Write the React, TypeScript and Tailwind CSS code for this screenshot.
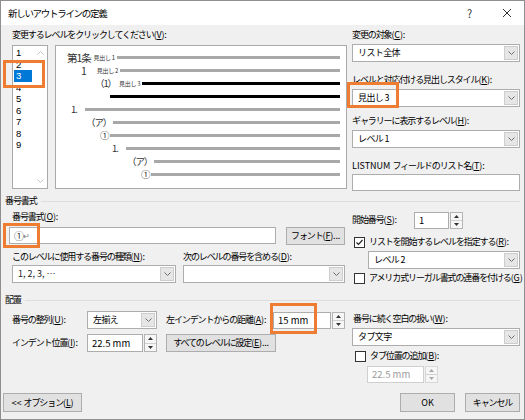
import React from "react";

function K({ t, k, tail = ":" }: { t: string; k: string; tail?: string }) {
  return (
    <span className="whitespace-nowrap">
      {t}
      <span className="tracking-[-0.2px]">
        (<span className="underline underline-offset-1">{k}</span>){tail}
      </span>
    </span>
  );
}

function Chevron({ up = false, color = "#6d6d6d" }: { up?: boolean; color?: string }) {
  return (
    <svg width="7" height="4" viewBox="0 0 7 4">
      <polyline
        points={up ? "0.5,3.5 3.5,0.5 6.5,3.5" : "0.5,0.5 3.5,3.5 6.5,0.5"}
        fill="none"
        stroke={color}
        strokeWidth="1"
      />
    </svg>
  );
}

function Select({
  value,
  className = "",
  valueClass = "tracking-[-0.6px]",
}: {
  value?: string;
  className?: string;
  valueClass?: string;
}) {
  return (
    <div className={`h-[18px] bg-white border border-[#adadad] flex items-stretch ${className}`}>
      <div className={`flex-1 pl-[5px] flex items-center whitespace-pre overflow-hidden ${valueClass}`}>
        {value}
      </div>
      <div className="w-[14px] my-[1px] mr-[1px] bg-[#e6e6e6] border border-[#cdcdcd] flex items-center justify-center">
        <Chevron />
      </div>
    </div>
  );
}

function Tri({ up, color }: { up?: boolean; color: string }) {
  return (
    <svg width="5" height="3" viewBox="0 0 5 3">
      <polygon points={up ? "0,3 5,3 2.5,0" : "0,0 5,0 2.5,3"} fill={color} />
    </svg>
  );
}

function Spin({
  value,
  className = "",
  disabled = false,
}: {
  value: string;
  className?: string;
  disabled?: boolean;
}) {
  const c = disabled ? "#a8a8a8" : "#333333";
  return (
    <div className={`h-[17px] flex gap-[1px] ${className}`}>
      <div
        className={`flex-1 bg-white border flex items-center pl-[4px] whitespace-nowrap tracking-normal text-[9.5px] ${
          disabled ? "border-[#cfcfcf] text-[#9b9b9b]" : "border-[#adadad]"
        }`}
      >
        {value}
      </div>
      <div
        className={`w-[13px] flex flex-col bg-[#f6f6f6] border ${
          disabled ? "border-[#d8d8d8]" : "border-[#b4b4b4]"
        }`}
      >
        <div className="flex-1 flex items-center justify-center border-b border-[#d0d0d0]">
          <Tri up color={c} />
        </div>
        <div className="flex-1 flex items-center justify-center">
          <Tri color={c} />
        </div>
      </div>
    </div>
  );
}

function Check({ checked = false }: { checked?: boolean }) {
  return (
    <div className="w-[11px] h-[11px] bg-white border border-[#333] flex items-center justify-center shrink-0">
      {checked && (
        <svg width="9" height="9" viewBox="0 0 9 9">
          <polyline points="1.5,4.5 3.5,6.5 7.5,2" fill="none" stroke="#222" strokeWidth="1.2" />
        </svg>
      )}
    </div>
  );
}

function Button({ children, className = "" }: { children: React.ReactNode; className?: string }) {
  return (
    <div
      className={`h-[18px] bg-[#e1e1e1] border border-[#adadad] flex items-center justify-center whitespace-nowrap ${className}`}
    >
      {children}
    </div>
  );
}

function Group({ title }: { title: string }) {
  return (
    <div className="h-[14px] flex items-center leading-[14px] pr-[4px]">
      <span>{title}</span>
      <div className="flex-1 h-px bg-[#dddddd] ml-[4px]" />
    </div>
  );
}

function Line({ black = false }: { black?: boolean }) {
  return <div className={`flex-1 h-[3px] ml-[2px] ${black ? "bg-black" : "bg-[#a8a8a8]"}`} />;
}

const Small = ({ children }: { children: React.ReactNode }) => (
  <span className="text-[6px] tracking-[-0.3px] ml-[3px] whitespace-pre">{children}</span>
);

function Preview() {
  return (
    <div className="w-[292px] h-[144px] bg-white border border-[#a9a9a9] pt-[5px] pr-[6px] flex flex-col text-[9.5px] leading-[13px] text-[#333]">
      <div className="h-[13px] flex items-center pl-[11px]">
        <span className="text-[10.5px]">第1条</span>
        <Small>見出し 1</Small>
        <Line />
      </div>
      <div className="h-[13px] flex items-center pl-[25px]">
        <span className="text-[10.5px] mr-[8px]">1</span>
        <Small>見出し 2</Small>
        <Line />
      </div>
      <div className="h-[13px] flex items-center pl-[39px]">
        <span>（1）</span>
        <Small>見出し 3</Small>
        <Line black />
      </div>
      <div className="h-[13px] flex items-center pl-[52px]">
        <Line black />
      </div>
      <div className="h-[13px] flex items-center pl-[15px]">
        <span>1.</span>
        <span className="w-[6px]" />
        <Line />
      </div>
      <div className="h-[13px] flex items-center pl-[30px]">
        <span>（ア）</span>
        <Line />
      </div>
      <div className="h-[13px] flex items-center pl-[44px]">
        <span>①</span>
        <Line />
      </div>
      <div className="h-[13px] flex items-center pl-[56px]">
        <span>1.</span>
        <span className="w-[6px]" />
        <Line />
      </div>
      <div className="h-[13px] flex items-center pl-[71px]">
        <span>（ア）</span>
        <Line />
      </div>
      <div className="h-[13px] flex items-center pl-[85px]">
        <span>①</span>
        <Line />
      </div>
    </div>
  );
}

function LevelList() {
  const levels = ["1", "2", "3", "4", "5", "6", "7", "8", "9"];
  return (
    <div className="w-[36px] h-[144px] bg-white border border-[#a9a9a9] flex">
      <div className="flex-1 pt-[1px] pl-[1px] flex flex-col text-[9.5px] tracking-normal font-['Liberation_Sans',sans-serif]">
        {levels.map((l) => (
          <div
            key={l}
            className={`h-[11.5px] leading-[11.5px] pl-[2px] w-[18px] overflow-hidden ${
              l === "3" ? "bg-[#0078d7] text-white" : ""
            }`}
          >
            {l}
          </div>
        ))}
      </div>
      <div className="w-[14px] flex flex-col items-center justify-between py-[5px]">
        <Chevron up color="#c2c2c2" />
        <Chevron color="#c2c2c2" />
      </div>
    </div>
  );
}

const orange = "absolute border-[3px] border-[#ee7d31]";

export default function App() {
  return (
    <div className="w-[525px] h-[420px] bg-[#f0f0f0] border border-[#8f8f8f] relative flex flex-col text-[9px] tracking-[-1.1px] text-black font-['Noto_Sans_CJK_JP','Noto_Sans',sans-serif] overflow-hidden">
      {/* title bar */}
      <div className="h-[24px] bg-white flex items-center pl-[7px] shrink-0">
        <span className="text-[9.5px] tracking-[-1.3px]">新しいアウトラインの定義</span>
        <div className="ml-auto flex items-center">
          <span className="text-[11px] text-[#333] mr-[31px]">?</span>
          <svg width="10" height="10" viewBox="0 0 10 10" className="mr-[12px]">
            <path d="M1 1 L9 9 M9 1 L1 9" stroke="#333" strokeWidth="1" />
          </svg>
        </div>
      </div>

      <div className="flex-1 flex flex-col pl-[4px]">
        {/* top */}
        <div className="h-[169px] flex shrink-0">
          <div className="w-[343px] pl-[7px]">
            <div className="mt-[3px] h-[14px] leading-[14px]">
              <K t="変更するレベルをクリックしてください" k="V" />
            </div>
            <div className="mt-[3px] flex gap-[7px]">
              <LevelList />
              <Preview />
            </div>
          </div>
          <div className="ml-[4px] w-[168px]">
            <div className="mt-[3px] h-[14px] leading-[14px]">
              <K t="変更の対象" k="C" />
            </div>
            <Select value="リスト全体" className="mt-[2px]" />
            <div className="mt-[11px] h-[14px] leading-[14px]">
              <K t="レベルと対応付ける見出しスタイル" k="K" />
            </div>
            <Select value="見出し 3" className="mt-[2px]" />
            <div className="mt-[7px] h-[14px] leading-[14px]">
              <K t="ギャラリーに表示するレベル" k="H" />
            </div>
            <Select value="レベル 1" className="mt-[2px]" />
            <div className="mt-[11px] h-[14px] leading-[14px]">
              <span className="tracking-normal">LISTNUM </span>
              <K t="フィールドのリスト名" k="T" />
            </div>
            <div className="mt-[1px] h-[17px] bg-white border border-[#adadad]" />
          </div>
        </div>

        {/* 番号書式 */}
        <Group title="番号書式" />
        <div className="h-[85px] flex shrink-0">
          <div className="w-[343px]">
            <div className="mt-[2px] h-[14px] leading-[14px] pl-[7px]">
              <K t="番号書式" k="O" />
            </div>
            <div className="mt-[3px] flex">
              <div className="ml-[4px] w-[267px] h-[17px] bg-white border border-[#adadad] flex items-center pl-[4px] text-[#333] text-[10px]">
                ①<span className="text-[8px] text-[#777]">↵</span>
              </div>
              <Button className="ml-[10px] w-[59px] h-[17px]">
                フォント
                <span className="tracking-[-0.2px]">
                  (<span className="underline underline-offset-1">F</span>)...
                </span>
              </Button>
            </div>
            <div className="mt-[5px] h-[14px] leading-[14px] pl-[7px] flex">
              <div className="w-[171px]">
                <K t="このレベルに使用する番号の種類" k="N" />
              </div>
              <div>
                <K t="次のレベルの番号を含める" k="D" />
              </div>
            </div>
            <div className="mt-[1px] pl-[7px] flex gap-[7px]">
              <Select value="1, 2, 3, …" className="w-[164px]" valueClass="tracking-normal text-[#222]" />
              <Select className="w-[162px]" />
            </div>
          </div>
          <div className="ml-[4px] w-[168px]">
            <div className="mt-[4px] h-[16px] flex items-center">
              <div className="w-[62px]">
                <K t="開始番号" k="S" />
              </div>
              <Spin value="1" className="w-[49px]" />
            </div>
            <div className="mt-[7px] h-[14px] flex items-center">
              <div className="ml-[2px]">
                <Check checked />
              </div>
              <span className="ml-[4px]">
                <K t="リストを開始するレベルを指定する" k="R" />
              </span>
            </div>
            <Select value="レベル 2" className="mt-[2px] ml-[16px] w-[152px]" />
            <div className="mt-[2px] h-[14px] flex items-center">
              <div className="ml-[2px]">
                <Check />
              </div>
              <span className="ml-[4px]">
                <K t="アメリカ式リーガル書式の連番を付ける" k="G" tail="" />
              </span>
            </div>
          </div>
        </div>

        {/* 配置 */}
        <Group title="配置" />
        <div className="flex shrink-0">
          <div className="w-[343px] pl-[7px]">
            <div className="mt-[4px] h-[18px] flex items-center">
              <div className="w-[75px]">
                <K t="番号の整列" k="U" />
              </div>
              <Select value="左揃え" className="w-[70px]" />
              <div className="ml-[9px] w-[107px]">
                <K t="左インデントからの距離" k="A" />
              </div>
              <Spin value="15 mm" className="w-[72px]" />
            </div>
            <div className="mt-[5px] h-[18px] flex items-center">
              <div className="w-[75px]">
                <K t="インデント位置" k="I" />
              </div>
              <Spin value="22.5 mm" className="w-[70px] h-[18px]" />
              <Button className="ml-[9px] w-[110px]">
                すべてのレベルに設定
                <span className="tracking-[-0.2px]">
                  (<span className="underline underline-offset-1">E</span>)...
                </span>
              </Button>
            </div>
          </div>
          <div className="ml-[4px] w-[168px]">
            <div className="mt-[5px] h-[14px] leading-[14px] pl-[1px]">
              <K t="番号に続く空白の扱い" k="W" />
            </div>
            <Select value="タブ文字" className="mt-[2px]" />
            <div className="mt-[3px] h-[14px] flex items-center">
              <div className="ml-[3px]">
                <Check />
              </div>
              <span className="ml-[4px]">
                <K t="タブ位置の追加" k="B" />
              </span>
            </div>
            <Spin value="22.5 mm" disabled className="mt-[3px] ml-[15px] w-[71px]" />
          </div>
        </div>

        {/* buttons */}
        <div className="mt-auto mb-[7px] h-[19px] flex pr-[4px]">
          <Button className="ml-[-2px] w-[79px] h-[19px]">
            <span className="tracking-normal whitespace-pre">&lt;&lt; </span>
            <K t="オプション" k="L" tail="" />
          </Button>
          <Button className="ml-auto w-[55px] h-[19px] border-[#0078d7] tracking-normal">OK</Button>
          <Button className="ml-[10px] w-[55px] h-[19px]">キャンセル</Button>
        </div>
      </div>

      {/* highlight boxes */}
      <div className={`${orange} left-[2px] top-[59px] w-[42px] h-[28px]`} />
      <div className={`${orange} left-[346px] top-[81px] w-[52px] h-[26px]`} />
      <div className={`${orange} left-[2px] top-[222px] w-[37px] h-[25px]`} />
      <div className={`${orange} left-[269px] top-[302px] w-[47px] h-[31px]`} />
    </div>
  );
}
